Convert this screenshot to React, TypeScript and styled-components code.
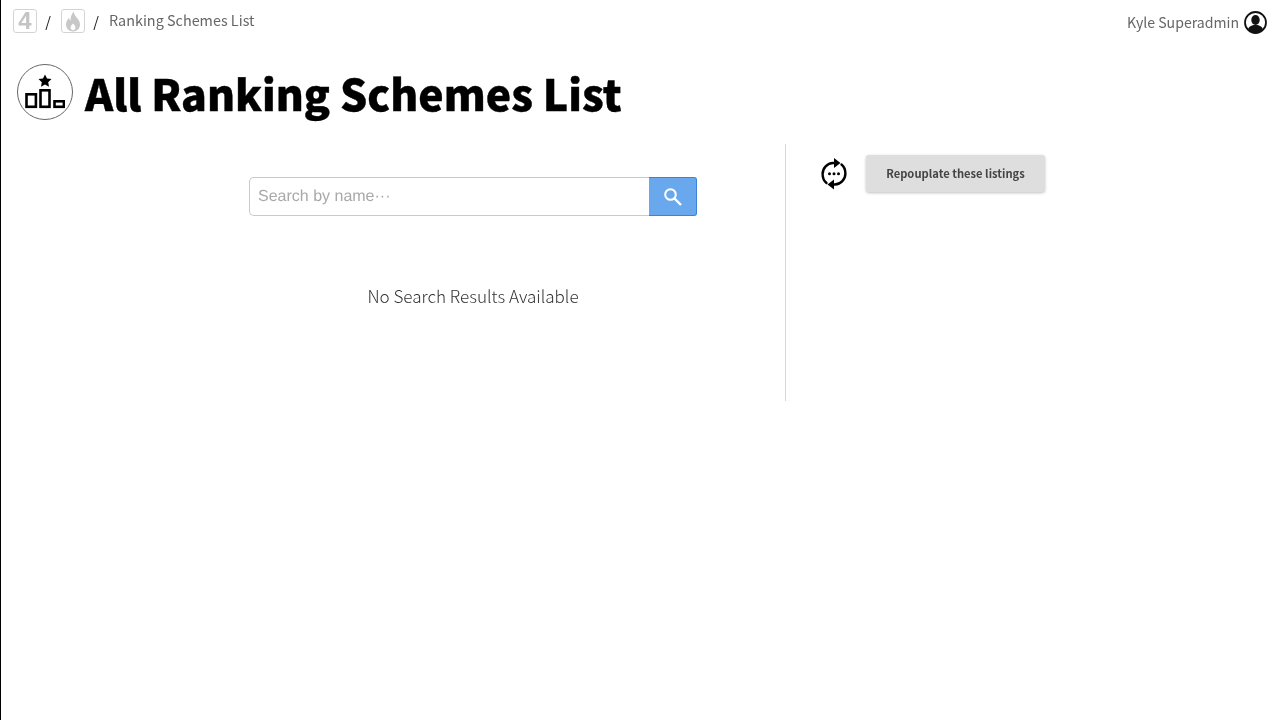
import styled, { createGlobalStyle } from 'styled-components'

const GlobalStyle = createGlobalStyle`
  html, body {
    margin: 0;
    padding: 0;
    background: #fff;
  }
  body {
    font-family: "Noto Sans CJK JP", "Liberation Sans", sans-serif;
  }
`

const Page = styled.div`
  box-sizing: border-box;
  width: 1280px;
  height: 720px;
  border-left: 1px solid #000;
  overflow: hidden;
  will-change: transform;
`

const TopBar = styled.div`
  display: flex;
  justify-content: space-between;
  align-items: flex-start;
  height: 55px;
  padding: 9px 13px 0 12px;
`

const Crumbs = styled.div`
  display: flex;
  align-items: center;
  height: 24px;
`

const CrumbIcon = styled.div`
  box-sizing: border-box;
  width: 24px;
  height: 24px;
  border: 1px solid #d4d4d4;
  border-radius: 3px;
  display: flex;
  align-items: center;
  justify-content: center;
`

const Four = styled.span`
  font-family: "Liberation Sans", sans-serif;
  font-weight: 700;
  font-size: 24px;
  line-height: 22px;
  color: #c4c4c4;
`

const Slash = styled.span`
  width: 22px;
  margin-right: 2px;
  text-align: center;
  font-size: 14.4px;
  line-height: 20px;
  color: #111;
`

const CrumbText = styled.span`
  font-size: 14.4px;
  line-height: 24px;
  color: #666;
  margin-top: -2px;
`

const User = styled.div`
  display: flex;
  align-items: center;
  gap: 5px;
  height: 26px;
  font-size: 14.1px;
  line-height: 24px;
  color: #666;
`

const TitleRow = styled.div`
  display: flex;
  align-items: center;
  gap: 12px;
  height: 56px;
  padding-left: 16px;
`

const Badge = styled.div`
  box-sizing: border-box;
  width: 56px;
  height: 56px;
  border: 1px solid #666;
  border-radius: 50%;
  display: flex;
  align-items: center;
  justify-content: center;
`

const Title = styled.h1`
  margin: 0;
  font-size: 42.7px;
  line-height: 56px;
  font-weight: 900;
  color: #000;
  white-space: nowrap;
  -webkit-text-stroke: 0.4px #000;
`

const Columns = styled.div`
  display: flex;
  margin-top: 24px;
`

const Main = styled.div`
  box-sizing: border-box;
  width: 785px;
  height: 257px;
  border-right: 1px solid #d8d8d8;
  padding: 33px 0 0 160px;
  display: flex;
  flex-direction: column;
  align-items: center;
`

const SearchForm = styled.form`
  display: flex;
  width: 448px;
  height: 39px;
  margin: 0;
`

const SearchInput = styled.input`
  box-sizing: border-box;
  flex: 1;
  min-width: 0;
  height: 39px;
  padding: 0 8px;
  border: 1px solid #cacaca;
  border-right: none;
  border-radius: 5px 0 0 5px;
  background: transparent;
  font-family: "Liberation Sans", sans-serif;
  font-size: 16px;
  text-rendering: geometricPrecision;
  outline: none;

  &::placeholder {
    color: #a9a9a9;
    opacity: 1;
  }
`

const SearchButton = styled.button`
  box-sizing: border-box;
  width: 48px;
  height: 39px;
  padding: 0;
  background: #6aa8ee;
  border: 1px solid #3b82d8;
  border-left: none;
  border-radius: 0 3px 3px 0;
  display: flex;
  align-items: center;
  justify-content: center;
`

const NoResults = styled.p`
  margin: 65px 0 0;
  font-size: 17.1px;
  line-height: 30px;
  font-weight: 300;
  color: #333;
`

const Side = styled.div`
  display: flex;
  align-items: flex-start;
  padding: 11px 0 0 34px;
  gap: 18px;
`

const RefreshWrap = styled.div`
  width: 28px;
  height: 37px;
  display: flex;
  align-items: center;
  justify-content: center;
`

const Repopulate = styled.button`
  box-sizing: border-box;
  width: 179px;
  height: 37px;
  border: none;
  border-radius: 3px;
  background: #dedede;
  box-shadow: 0 1px 3px rgba(0, 0, 0, 0.25);
  font-family: inherit;
  font-size: 11.2px;
  line-height: 35px;
  font-weight: 700;
  color: #444;
  padding: 0 0 1px;
`

const App = () => {
  return (
    <Page>
      <GlobalStyle />
      <TopBar>
        <Crumbs>
          <CrumbIcon>
            <Four>4</Four>
          </CrumbIcon>
          <Slash>/</Slash>
          <CrumbIcon>
            <svg width="18" height="21" viewBox="0 0 18 21">
              <path
                d="M9.500 0.500c0.400 3 2.300 4.800 4 7 1.500 2 2.500 3.900 2.500 6 0 4-3.200 7-7 7s-7-3-7-7c0-3 1.400-5 3-6.800 0.200 1.300 0.700 2.300 1.600 3C6.300 6.600 7.500 3.200 9.500 0.500zM9 12.500c-1.300 1.500-2.400 2.600-2.400 4.200 0 1.400 1.100 2.500 2.400 2.500s2.400-1.100 2.400-2.500c0-1.600-1.100-2.700-2.400-4.200z"
                fill="#c8c8c8"
                fillRule="evenodd"
              />
            </svg>
          </CrumbIcon>
          <Slash>/</Slash>
          <CrumbText>Ranking Schemes List</CrumbText>
        </Crumbs>
        <User>
          Kyle Superadmin
          <svg width="23" height="23" viewBox="0 0 23 23">
            <circle cx="11.500" cy="11.500" r="10.500" fill="#fff" stroke="#111" strokeWidth="1.800" />
            <ellipse cx="11.500" cy="9" rx="4.200" ry="5" fill="#111" />
            <path d="M3.800 18.500c1-3 4-4 5.700-4.500h4c1.700 0.500 4.700 1.500 5.700 4.500-2 2.300-4.700 3.700-7.700 3.700s-5.700-1.400-7.700-3.700z" fill="#111" />
          </svg>
        </User>
      </TopBar>
      <TitleRow>
        <Badge>
          <svg width="40" height="36" viewBox="0 0 40 36">
            <path
              d="M20 0.500l2 4 4.500 0.600-3.300 3.100 0.800 4.500-4-2.100-4 2.100 0.800-4.500-3.300-3.100 4.500-0.600z"
              fill="#000"
            />
            <g fill="none" stroke="#000" strokeWidth="2.600">
              <rect x="1.500" y="20.300" width="9.400" height="12.500" />
              <rect x="15.500" y="16.300" width="9" height="16.500" />
              <rect x="29.500" y="27.300" width="9.400" height="5.500" />
            </g>
          </svg>
        </Badge>
        <Title>All Ranking Schemes List</Title>
      </TitleRow>
      <Columns>
        <Main>
          <SearchForm onSubmit={(e) => e.preventDefault()}>
            <SearchInput type="text" placeholder="Search by name···" />
            <SearchButton type="button" aria-label="Search">
              <svg width="20" height="20" viewBox="0 0 20 20">
                <circle cx="7.500" cy="7.500" r="5.300" fill="none" stroke="#fff" strokeWidth="2" />
                <path d="M11.500 11.500l6.500 6.500" stroke="#fff" strokeWidth="2.400" />
              </svg>
            </SearchButton>
          </SearchForm>
          <NoResults>No Search Results Available</NoResults>
        </Main>
        <Side>
          <RefreshWrap>
            <svg width="26" height="32" viewBox="0 0 26 32">
              <g fill="none" stroke="#000" strokeWidth="2.400" strokeLinecap="round">
                <path d="M5.500 25C3 23 1.600 19.800 1.600 16c0-6 4.700-10.700 10.400-11h2" />
                <path d="M20.500 6.500c2.500 2 3.900 5.200 3.900 9 0 6-4.700 10.700-10.400 11h-2" />
              </g>
              <path d="M13 0l6.500 5-6.500 5z" fill="#000" />
              <path d="M13 21.500l-6.500 5 6.500 5z" fill="#000" />
              <circle cx="8.500" cy="15.700" r="1.500" fill="#000" />
              <circle cx="13" cy="15.700" r="1.500" fill="#000" />
              <circle cx="17.500" cy="15.700" r="1.500" fill="#000" />
            </svg>
          </RefreshWrap>
          <Repopulate type="button">Repouplate these listings</Repopulate>
        </Side>
      </Columns>
    </Page>
  )
}

export default App
